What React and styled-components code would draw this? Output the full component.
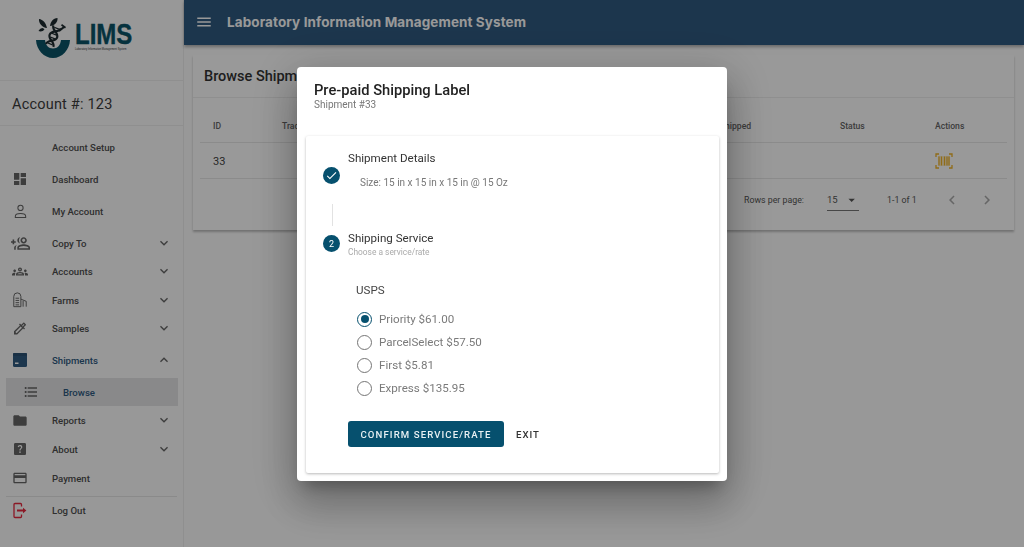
import React from "react";
import styled, { createGlobalStyle } from "styled-components";
import {
  MdDashboard,
  MdOutlineGroupAdd,
  MdOutlineGroups,
  MdOutlineColorize,
  MdExpandMore,
  MdExpandLess,
  MdFormatListBulleted,
  MdFolder,
  MdHelpCenter,
  MdOutlineCreditCard,
  MdMenu,
  MdCheck,
  MdArrowDropDown,
  MdChevronLeft,
  MdChevronRight,
} from "react-icons/md";

const GlobalStyle = createGlobalStyle`
  html, body {
    margin: 0;
    height: 100%;
    overflow: hidden;
    background: #fdfdfd;
    font-family: Roboto, "Liberation Sans", sans-serif;
  }
  * { box-sizing: border-box; }
`;

const Flipped = styled.span`
  display: flex;
  transform: scaleX(-1);
`;

const PersonIcon = () => (
  <svg width="15" height="15" viewBox="0 0 16 16" fill="none" stroke="currentColor" strokeWidth="1.1">
    <circle cx="8" cy="4.2" r="2.8" />
    <path d="M2.500 14.500v-1.500c0-1.600 2.500-2.800 5.500-2.800s5.500 1.200 5.500 2.800v1.500z" />
  </svg>
);

const FarmIcon = () => (
  <svg width="18" height="18" viewBox="0 0 18 18" fill="none" stroke="currentColor" strokeWidth="1.1">
    <path d="M2 16.500V5a4 4 0 0 1 8 0v11.500zM10 8l6 2.500v6M12.500 10v6.500M4 7h4M4 9.500h4M4 12h4M4 14.500h4" />
  </svg>
);

const ShipmentIcon = () => (
  <svg width="16" height="16" viewBox="0 0 16 16">
    <rect x="1" y="1" width="14" height="14" rx="1.500" fill="#2f5a80" />
    <rect x="1" y="1" width="14" height="3" rx="1" fill="#2a5074" />
    <rect x="3" y="10.500" width="3.500" height="1.500" fill="#fff" />
  </svg>
);

const LogoutIcon = () => (
  <svg width="16" height="17" viewBox="0 0 16 17" fill="none" stroke="#e8283f" strokeWidth="1.300">
    <path d="M9.500 4.500V2.500a1 1 0 0 0-1-1h-5.500a1 1 0 0 0-1 1v12a1 1 0 0 0 1 1h5.500a1 1 0 0 0 1-1v-2" />
    <path d="M5 8.500h7" strokeWidth="2" />
    <path d="M11 5.800l3.400 2.700-3.400 2.700z" fill="#e8283f" stroke="none" />
  </svg>
);

const BarcodeIcon = () => (
  <svg width="18" height="16" viewBox="0 0 18 16" fill="none" stroke="#f0b429" strokeWidth="1.300">
    <rect x="3" y="3" width="12" height="10" fill="#f0b429" fillOpacity="0.25" stroke="none" />
    <path d="M1 4V1h3M14 1h3v3M1 12v3h3M14 15h3v-3" />
    <path d="M4 3.500v9M6.500 3.500v9M9.500 3.500v9M12 3.500v9M14 3.500v9" strokeWidth="1.200" />
  </svg>
);

const LogoMark = () => (
  <svg width="36" height="42" viewBox="0 0 36 42">
    <path d="M1 23h9c.5 5 3.500 8.500 8 8.500s7.500-3.500 8-8.500h9c-.5 10-8 18-17 18S1.500 33 1 23z" fill="#0b5468" />
    <path d="M12 11C11 6 8 2.500 4 2c-.5 4 3 8.500 8 9zM15 9c.5-4 3-8 7.500-8 .5 4-3 8-7.500 8zM8 11c-2 0-3.500 1-4.500 3 2 1 4.500.5 6-1.500z" fill="#1d2b2f" />
    <g transform="rotate(22 18 20)" fill="none" stroke="#1d2b2f">
      <path d="M14 9c0 5 8 5 8 10s-8 5-8 10" strokeWidth="2.200" />
      <path d="M22 9c0 5-8 5-8 10s8 5 8 10" strokeWidth="2.200" />
      <path d="M15.500 10.500h5M15.500 17h5M15.500 21h5M15.500 27.500h5" strokeWidth="1.200" />
    </g>
    <path d="M24 14l5-4" stroke="#1d2b2f" strokeWidth="2.200" />
    <path d="M27 7l4 3-1 1.500-4-3z" fill="#1d2b2f" />
  </svg>
);

const navItems = [
  { label: "Account Setup", gap: 0 },
  { label: "Dashboard", gap: 4, icon: <MdDashboard size={18} /> },
  { label: "My Account", gap: 4, icon: <PersonIcon /> },
  { label: "Copy To", gap: 4, icon: <Flipped><MdOutlineGroupAdd size={19} /></Flipped>, arrow: "down" },
  { label: "Accounts", gap: 0, icon: <MdOutlineGroups size={19} />, arrow: "down" },
  { label: "Farms", gap: 1, icon: <FarmIcon />, arrow: "down" },
  { label: "Samples", gap: 0, icon: <MdOutlineColorize size={19} />, arrow: "down" },
  { label: "Shipments", gap: 4, icon: <ShipmentIcon />, arrow: "up", $active: true },
  { label: "Browse", gap: 4, icon: <MdFormatListBulleted size={18} />, sub: true, $active: true },
  { label: "Reports", gap: 0, icon: <MdFolder size={19} />, arrow: "down" },
  { label: "About", gap: 1, icon: <MdHelpCenter size={18} />, arrow: "down" },
  { label: "Payment", gap: 1, icon: <MdOutlineCreditCard size={18} /> },
];

const rates = ["Priority $61.00", "ParcelSelect $57.50", "First $5.81", "Express $135.95"];

function NavRow({ label, gap, icon, arrow, sub, $active }) {
  return (
    <NavItem $gap={gap} $sub={sub} $active={$active}>
      <NavIcon>{icon}</NavIcon>
      <span>{label}</span>
      {arrow === "down" && <Arrow><MdExpandMore size={16} /></Arrow>}
      {arrow === "up" && <Arrow><MdExpandLess size={16} /></Arrow>}
    </NavItem>
  );
}

export default function App() {
  return (
    <Page>
      <GlobalStyle />
      <Sidebar>
        <LogoBlock>
          <LogoMark />
          <LogoText>
            <strong>LIMS</strong>
            <small>Laboratory Information Management System</small>
          </LogoText>
        </LogoBlock>
        <AccountBlock>Account #: 123</AccountBlock>
        <Nav>
          {navItems.map((item) => (
            <NavRow key={item.label} {...item} />
          ))}
          <NavDivider />
          <NavItem $gap={0}>
            <NavIcon><LogoutIcon /></NavIcon>
            <span>Log Out</span>
          </NavItem>
        </Nav>
      </Sidebar>

      <Content>
        <Header>
          <MdMenu size={18} />
          <h1>Laboratory Information Management System</h1>
        </Header>
        <Card>
          <CardTitle>Browse Shipments</CardTitle>
          <TableHead>
            <span>ID</span>
            <span>Tracking</span>
            <span>Date Shipped</span>
            <span>Status</span>
            <span>Actions</span>
          </TableHead>
          <TableRow>
            <span>33</span>
            <span />
            <span />
            <span />
            <BarcodeIcon />
          </TableRow>
          <TableFooter>
            <span>Rows per page:</span>
            <PageSelect>
              15
              <MdArrowDropDown size={16} />
            </PageSelect>
            <span>1-1 of 1</span>
            <Pager>
              <MdChevronLeft size={18} />
              <MdChevronRight size={18} />
            </Pager>
          </TableFooter>
        </Card>
      </Content>

      <Backdrop>
        <Dialog>
          <DialogTitle>Pre-paid Shipping Label</DialogTitle>
          <DialogSub>Shipment #33</DialogSub>
          <StepCard>
            <Step>
              <StepCircle><MdCheck size={13} /></StepCircle>
              <div>
                <StepLabel>Shipment Details</StepLabel>
                <StepDetail>Size: 15 in x 15 in x 15 in @ 15 Oz</StepDetail>
              </div>
            </Step>
            <Connector />
            <Step>
              <StepCircle>2</StepCircle>
              <div>
                <StepLabel>Shipping Service</StepLabel>
                <StepHint>Choose a service/rate</StepHint>
              </div>
            </Step>
            <Carrier>USPS</Carrier>
            <RateList>
              {rates.map((rate, index) => (
                <Rate key={rate}>
                  <RadioDot $checked={index === 0} />
                  {rate}
                </Rate>
              ))}
            </RateList>
            <Actions>
              <ConfirmButton>CONFIRM SERVICE/RATE</ConfirmButton>
              <ExitButton>EXIT</ExitButton>
            </Actions>
          </StepCard>
        </Dialog>
      </Backdrop>
    </Page>
  );
}

const Page = styled.div`
  display: flex;
  width: 1024px;
  height: 547px;
  overflow: hidden;
`;

const Sidebar = styled.aside`
  width: 184px;
  flex-shrink: 0;
  height: 100%;
  border-right: 1px solid #efefef;
  color: #4a4a4a;
`;

const LogoBlock = styled.div`
  height: 81px;
  padding: 17px 0 0 35px;
  display: flex;
  align-items: flex-start;
  gap: 4px;
  border-bottom: 1px solid #efefef;
`;

const LogoText = styled.div`
  display: flex;
  flex-direction: column;
  padding-top: 4px;
  color: #0b5468;
  strong {
    font: 700 30px/26px "Liberation Sans", sans-serif;
    transform: scaleX(0.8);
    transform-origin: left center;
    width: 58px;
    -webkit-text-stroke: 0.4px #0b5468;
  }
  small {
    margin-top: 1px;
    font: 400 2.6px/3px "Liberation Sans", sans-serif;
    color: #333;
    white-space: nowrap;
  }
`;

const AccountBlock = styled.div`
  height: 45px;
  padding: 2px 0 0 12px;
  display: flex;
  align-items: center;
  font-size: 14.5px;
  letter-spacing: 0.2px;
  color: #3c3c3c;
  border-bottom: 1px solid #efefef;
`;

const Nav = styled.nav`
  display: flex;
  flex-direction: column;
  padding-top: 7px;
`;

const NavItem = styled.div`
  display: flex;
  align-items: center;
  height: 28px;
  flex-shrink: 0;
  margin-top: ${(p) => p.$gap}px;
  margin-left: ${(p) => (p.$sub ? 6 : 0)}px;
  width: ${(p) => (p.$sub ? "172px" : "auto")};
  padding-left: ${(p) => (p.$sub ? 17 : 12)}px;
  gap: 24px;
  font-size: 9.6px;
  font-weight: 500;
  color: ${(p) => (p.$active ? "#2f5a80" : "#4f4f4f")};
  background: ${(p) => (p.$sub ? "#e4e4e6" : "transparent")};
`;

const NavIcon = styled.span`
  width: 16px;
  height: 18px;
  display: flex;
  align-items: center;
  justify-content: center;
  flex-shrink: 0;
  color: #666;
`;

const Arrow = styled.span`
  display: flex;
  margin-left: auto;
  margin-right: 11px;
  color: #666;
`;

const NavDivider = styled.div`
  height: 1px;
  margin: 4px 6px -1px;
  background: #e6e6e6;
`;

const Content = styled.main`
  flex: 1;
  min-width: 0;
`;

const Header = styled.header`
  height: 45px;
  background: #2f5a80;
  color: #fff;
  display: flex;
  align-items: center;
  padding: 0 0 2px 11px;
  gap: 14px;
  box-shadow: 0 2px 3px rgba(0, 0, 0, 0.3);
  h1 {
    margin: 0;
    font: 700 13.5px Inter, "Open Sans", sans-serif;
    letter-spacing: 0.1px;
  }
`;

const Card = styled.section`
  margin: 10px 10px 0 9px;
  height: 175px;
  background: #fff;
  box-shadow: 0 2px 2px rgba(0, 0, 0, 0.25);
  padding: 0 7px;
`;

const CardTitle = styled.h2`
  margin: 0 -7px;
  height: 43px;
  padding-left: 11px;
  display: flex;
  align-items: center;
  font-size: 14.5px;
  font-weight: 500;
  color: #333;
  border-bottom: 1px solid #eee;
`;

const tableColumns = `
  display: grid;
  grid-template-columns: 69px 418px 140px 95px 1fr;
  padding-left: 13px;
  align-items: center;
  border-bottom: 1px solid #e8e8e8;
`;

const TableHead = styled.div`
  ${tableColumns}
  height: 45px;
  padding-top: 12px;
  font-size: 8.6px;
  font-weight: 500;
  color: #666;
`;

const TableRow = styled.div`
  ${tableColumns}
  height: 36px;
  padding-top: 1px;
  font-size: 11px;
  color: #444;
`;

const TableFooter = styled.div`
  display: flex;
  align-items: center;
  height: 42px;
  padding-left: 544px;
  font-size: 8.8px;
  color: #555;
`;

const PageSelect = styled.div`
  display: flex;
  align-items: center;
  width: 32px;
  height: 22px;
  margin: 0 28px 0 23px;
  gap: 6px;
  font-size: 9.5px;
  border-bottom: 1px solid #777;
`;

const Pager = styled.div`
  display: flex;
  gap: 17px;
  margin-left: 26px;
  color: #aaa;
`;

const Backdrop = styled.div`
  position: fixed;
  inset: 0;
  background: rgba(0, 0, 0, 0.4);
  display: flex;
  align-items: center;
  justify-content: center;
`;

const Dialog = styled.div`
  width: 430px;
  background: #fff;
  border-radius: 4px;
  padding: 13px 8px 8px 9px;
  box-shadow: 0 11px 15px -7px rgba(0, 0, 0, 0.28), 0 24px 38px 3px rgba(0, 0, 0, 0.18),
    0 9px 46px 8px rgba(0, 0, 0, 0.16);
`;

const DialogTitle = styled.h2`
  margin: 0 0 0 8px;
  font-size: 14.7px;
  line-height: 20px;
  font-weight: 500;
  color: #222;
`;

const DialogSub = styled.div`
  margin: -1px 0 0 8px;
  font-size: 10px;
  line-height: 12px;
  color: #777;
`;

const StepCard = styled.div`
  margin-top: 25px;
  padding: 14px 17px 26px;
  border-radius: 2px;
  box-shadow: 0 1px 3px rgba(0, 0, 0, 0.28);
`;

const Step = styled.div`
  display: flex;
  align-items: center;
  gap: 8px;
`;

const StepCircle = styled.span`
  width: 17px;
  height: 17px;
  border-radius: 50%;
  flex-shrink: 0;
  background: #06506e;
  color: #fff;
  font-size: 9px;
  display: flex;
  align-items: center;
  justify-content: center;
`;

const StepLabel = styled.div`
  font-size: 11.6px;
  line-height: 16px;
  color: #333;
`;

const StepDetail = styled.div`
  margin: 9px 0 11px 12px;
  font-size: 10px;
  line-height: 16px;
  color: #777;
`;

const StepHint = styled.div`
  font-size: 8.4px;
  line-height: 12px;
  color: #aaa;
`;

const Connector = styled.div`
  width: 1px;
  height: 22px;
  margin: 2px 0 4px 9px;
  background: #e2e2e2;
`;

const Carrier = styled.div`
  margin: 24px 0 0 33px;
  font-size: 11.6px;
  line-height: 16px;
  color: #444;
`;

const RateList = styled.div`
  margin: 10px 0 0 34px;
`;

const Rate = styled.label`
  display: flex;
  align-items: center;
  height: 23px;
  gap: 7px;
  font-size: 11.6px;
  color: #7a7a7a;
`;

const RadioDot = styled.span`
  width: 15px;
  height: 15px;
  border-radius: 50%;
  border: 1.6px solid ${(p) => (p.$checked ? "#06506e" : "#757575")};
  display: flex;
  align-items: center;
  justify-content: center;
  &::after {
    content: "";
    width: 8px;
    height: 8px;
    border-radius: 50%;
    background: ${(p) => (p.$checked ? "#06506e" : "transparent")};
  }
`;

const Actions = styled.div`
  display: flex;
  align-items: center;
  margin: 21px 0 0 25px;
  gap: 12px;
`;

const ConfirmButton = styled.button`
  width: 156px;
  height: 26px;
  padding: 1px 0 0;
  border: 0;
  border-radius: 3px;
  background: #06506e;
  color: #e8f0f3;
  font: 500 9.6px Roboto, sans-serif;
  letter-spacing: 1.1px;
`;

const ExitButton = styled.button`
  border: 0;
  padding: 1px 0 0;
  background: none;
  color: #333;
  font: 500 9.6px Roboto, sans-serif;
  letter-spacing: 1px;
`;
